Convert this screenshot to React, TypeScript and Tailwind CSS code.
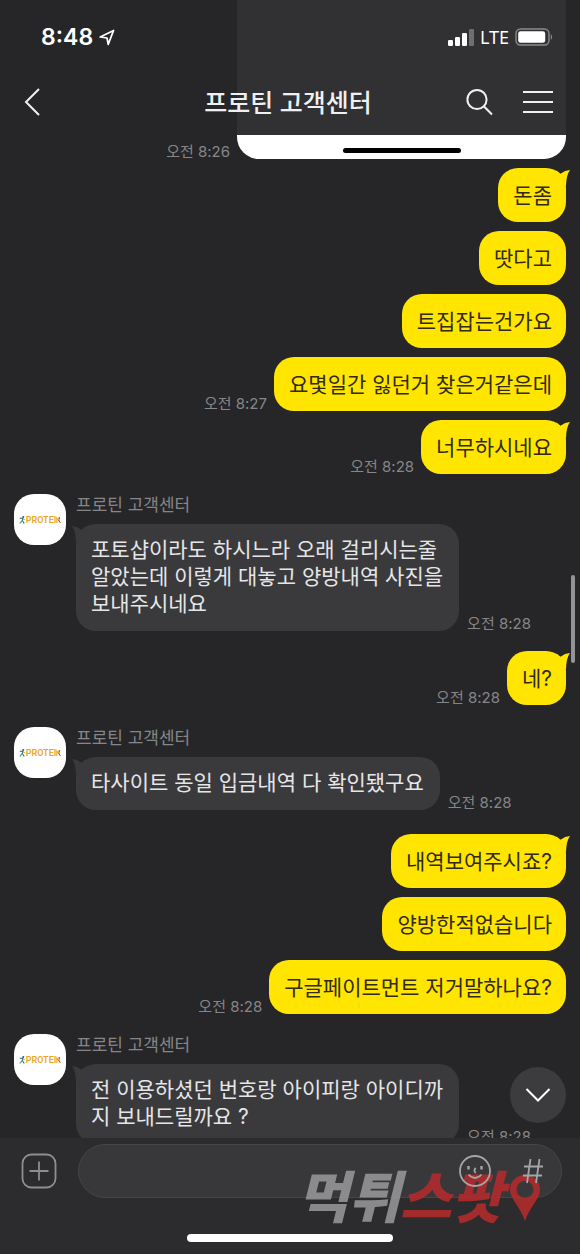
import { ReactNode } from "react";

type Message = {
  id: number;
  from: "me" | "center";
  text: string;
  time?: string;
  tail?: boolean;
  space: string;
};

const CENTER_NAME = "프로틴 고객센터";

const messages: Message[] = [
  { id: 1, from: "me", text: "돈좀", tail: true, space: "mt-[9px]" },
  { id: 2, from: "me", text: "땃다고", space: "mt-[9px]" },
  { id: 3, from: "me", text: "트집잡는건가요", space: "mt-[9px]" },
  {
    id: 4,
    from: "me",
    text: "요몇일간 잃던거 찾은거같은데",
    time: "오전 8:27",
    space: "mt-[9px]",
  },
  { id: 5, from: "me", text: "너무하시네요", time: "오전 8:28", tail: true, space: "mt-[9px]" },
  {
    id: 6,
    from: "center",
    text: "포토샵이라도 하시느라 오래 걸리시는줄\n알았는데 이렇게 대놓고 양방내역 사진을\n보내주시네요",
    time: "오전 8:28",
    space: "mt-5",
  },
  { id: 7, from: "me", text: "네?", time: "오전 8:28", tail: true, space: "mt-5" },
  {
    id: 8,
    from: "center",
    text: "타사이트 동일 입금내역 다 확인됐구요",
    time: "오전 8:28",
    space: "mt-[22px]",
  },
  { id: 9, from: "me", text: "내역보여주시죠?", tail: true, space: "mt-6" },
  { id: 10, from: "me", text: "양방한적없습니다", space: "mt-[9px]" },
  {
    id: 11,
    from: "me",
    text: "구글페이트먼트 저거말하나요?",
    time: "오전 8:28",
    space: "mt-[9px]",
  },
  {
    id: 12,
    from: "center",
    text: "전 이용하셨던 번호랑 아이피랑 아이디까\n지 보내드릴까요 ?",
    time: "오전 8:28",
    space: "mt-5",
  },
];

function Time({ children }: { children: ReactNode }) {
  return (
    <time className="shrink-0 text-[15px] leading-[14px] whitespace-nowrap text-[#868688]">
      {children}
    </time>
  );
}

function Avatar() {
  return (
    <div className="flex h-[51px] w-[52px] shrink-0 items-center justify-center rounded-[20px] bg-white">
      <svg width="7" height="10" viewBox="0 0 9 11" fill="none" aria-hidden="true">
        <circle cx="5.5" cy="1.6" r="1.3" fill="#2d5f7c" />
        <path d="M1 3.2 L5 3.4 L4.4 6.4 L6.8 10" stroke="#2d6f8c" strokeWidth="1.4" />
        <path d="M4.4 6 L1 10" stroke="#4b9a63" strokeWidth="1.4" />
        <path d="M5 4 L8 5.4" stroke="#e0a22c" strokeWidth="1.1" />
      </svg>
      <span className="font-['Roboto',sans-serif] text-[9px] leading-3 font-semibold text-[#eda528]">
        PROTEI
      </span>
      <svg width="5" height="8" viewBox="0 0 6 9" fill="none" aria-hidden="true">
        <path d="M1 8 V2 L4 6 V2" stroke="#eda528" strokeWidth="1.4" />
        <circle cx="4" cy="2" r="1" fill="#8a6436" />
        <path d="M3 5 L5.5 8" stroke="#b0533a" strokeWidth="1.2" />
      </svg>
    </div>
  );
}

function SentMessage({ message }: { message: Message }) {
  return (
    <div className={`flex items-end justify-end gap-[7px] pr-[14px] ${message.space}`}>
      {message.time && <Time>{message.time}</Time>}
      <div className="relative rounded-[20px] bg-[#ffe500] pt-[14px] pr-[14px] pb-3 pl-[15px]">
        {message.tail && (
          <svg
            className="absolute top-0 -right-1"
            width="18"
            height="18"
            viewBox="0 0 18 18"
            fill="#ffe500"
            aria-hidden="true"
          >
            <path d="M4 2.5 L8.5 5.8 Q13 2.3 18 2 Q14.3 7 14 18 L2 14 Z" />
          </svg>
        )}
        <p className="relative text-[21px] leading-7 text-[#302b12]">{message.text}</p>
      </div>
    </div>
  );
}

function ReceivedMessage({ message }: { message: Message }) {
  return (
    <div className={`flex gap-2.5 pl-[14px] ${message.space}`}>
      <Avatar />
      <div className="min-w-0">
        <h2 className="pb-2 text-[17px] leading-[22px] text-[#868688]">{CENTER_NAME}</h2>
        <div className="flex items-end gap-2">
          <div className="relative rounded-[20px] bg-[#3a3a3c] pt-3 pr-4 pb-[14px] pl-[15px]">
            <svg
              className="absolute top-0 -left-1"
              width="18"
              height="18"
              viewBox="0 0 18 18"
              fill="#3a3a3c"
              aria-hidden="true"
            >
              <path d="M14 2.5 L9.5 5.8 Q5 2.3 0 2 Q3.7 7 4 18 L16 14 Z" />
            </svg>
            <p className="relative text-[21px] leading-[27px] whitespace-pre-line text-[#e6e6e8]">
              {message.text}
            </p>
          </div>
          <Time>{message.time}</Time>
        </div>
      </div>
    </div>
  );
}

function StatusBar() {
  return (
    <div className="flex h-[74px] items-center justify-between pr-[27px] pl-[41px] text-white">
      <div className="flex items-center gap-1.5">
        <span className="text-[23px] leading-7 font-semibold">8:48</span>
        <svg width="16" height="17" viewBox="0 0 16 17" fill="none" aria-hidden="true">
          <path
            d="M1.2 8 L14.6 1.4 L9.2 15.4 L8 9 Z"
            stroke="currentColor"
            strokeWidth="1.7"
            strokeLinejoin="round"
          />
        </svg>
      </div>
      <div className="flex items-center gap-1.5">
        <svg width="26" height="17" viewBox="0 0 26 17" fill="currentColor" aria-hidden="true">
          <rect x="0" y="11" width="5" height="6" rx="1.3" />
          <rect x="7" y="8" width="5" height="9" rx="1.3" />
          <rect x="14" y="4" width="5" height="13" rx="1.3" />
          <rect x="21" y="0" width="5" height="17" rx="1.3" opacity="0.3" />
        </svg>
        <span className="font-['Noto_Sans',sans-serif] text-[18px] leading-6">LTE</span>
        <svg width="38" height="18" viewBox="0 0 38 18" fill="none" aria-hidden="true">
          <rect x="1" y="1" width="33" height="16" rx="4.5" stroke="#8a8a8c" strokeWidth="1.4" />
          <rect x="3.2" y="3.2" width="27" height="11.6" rx="2.4" fill="currentColor" />
          <path d="M35.8 6 Q38.6 9 35.8 12 Z" fill="#8a8a8c" />
        </svg>
      </div>
    </div>
  );
}

function Header() {
  return (
    <header className="absolute inset-x-0 top-0 z-10 h-[135px] bg-[#262628]/95">
      <StatusBar />
      <div className="grid grid-cols-[1fr_auto_1fr] items-center pr-[26px] pl-[22px] text-[#f0f0f2]">
        <button type="button" aria-label="뒤로" className="flex h-14 w-10 items-center">
          <svg width="24" height="30" viewBox="0 0 24 30" fill="none" stroke="currentColor" strokeWidth="2">
            <path d="M17 2 L4 15 L17 28" />
          </svg>
        </button>
        <h1 className="pt-0.5 text-[25px] leading-9 font-medium">{CENTER_NAME}</h1>
        <div className="flex items-center justify-end gap-7">
          <button type="button" aria-label="검색">
            <svg width="30" height="30" viewBox="0 0 30 30" fill="none" stroke="currentColor" strokeWidth="2">
              <circle cx="13" cy="12.5" r="9.6" />
              <path d="M19.8 19.3 L28 27.5" />
            </svg>
          </button>
          <button type="button" aria-label="메뉴">
            <svg width="32" height="30" viewBox="0 0 32 30" fill="none" stroke="currentColor" strokeWidth="2">
              <path d="M1 5 H31 M1 15 H31 M1 25 H31" />
            </svg>
          </button>
        </div>
      </div>
    </header>
  );
}

function Watermark() {
  return (
    <div className="pointer-events-none absolute right-[39px] bottom-6 flex items-center opacity-85">
      <p className="text-[56px] leading-[64px] font-black whitespace-nowrap text-[#9a9a9c] italic">
        먹튀<span className="text-[#b92b2c]">스팟</span>
      </p>
      <svg className="ml-1.5" width="32" height="48" viewBox="0 0 32 48" aria-hidden="true">
        <path
          fillRule="evenodd"
          fill="#b92b2c"
          d="M16 1 C7 1 1 7.5 1 15.5 C1 25 11 32 16 47 C21 32 31 25 31 15.5 C31 7.5 25 1 16 1 Z M16 7 A8.5 8.5 0 1 1 16 24 A8.5 8.5 0 1 1 16 7 Z"
        />
      </svg>
    </div>
  );
}

function Footer() {
  return (
    <footer className="relative bg-[#2c2c2e] pt-1.5 pb-3">
      <form className="flex items-center gap-[21px] pr-[18px] pl-[21px] text-[#8e8e90]">
        <button type="button" aria-label="첨부">
          <svg width="36" height="36" viewBox="0 0 36 36" fill="none" stroke="currentColor" strokeWidth="1.8">
            <rect x="1.5" y="1.5" width="33" height="33" rx="9" />
            <path d="M18 8.5 V27.5 M8.5 18 H27.5" />
          </svg>
        </button>
        <div className="flex h-[54px] flex-1 items-center rounded-full border border-[#454547] bg-[#38383a] pr-[17px]">
          <input
            type="text"
            aria-label="메시지 입력"
            className="h-full min-w-0 flex-1 bg-transparent px-5 text-[21px] text-white outline-none"
          />
          <div className="relative z-10 flex items-center gap-[30px] text-[#a5a5a7]">
            <button type="button" aria-label="이모티콘">
              <svg width="34" height="34" viewBox="0 0 34 34" fill="none" stroke="currentColor" strokeWidth="1.8">
                <circle cx="17" cy="17" r="15" />
                <path d="M10.5 12 V15.5 M23.5 12 V15.5" strokeWidth="2.4" />
                <path d="M17.8 14 Q15 16.5 17.8 19" />
                <path d="M10.5 20.5 Q17 27.5 23.5 20.5" />
              </svg>
            </button>
            <button type="button" aria-label="샵검색">
              <svg width="22" height="26" viewBox="0 0 22 26" fill="none" stroke="currentColor" strokeWidth="1.8">
                <path d="M8.5 1 L5 25 M17.5 1 L14 25 M2 8.5 H21 M1 17.5 H20" />
              </svg>
            </button>
          </div>
        </div>
      </form>
      <div className="mx-auto mt-9 h-2 w-[206px] rounded-full bg-white" />
      <Watermark />
    </footer>
  );
}

export default function App() {
  return (
    <div className="relative flex h-screen flex-col overflow-hidden bg-[#262628] font-['Inter','Noto_Sans_CJK_KR',sans-serif]">
      <Header />
      <main className="relative min-h-0 flex-1 overflow-hidden">
        {/* Photo message, mostly scrolled under the header */}
        <div className="flex items-end justify-end gap-[7px] pr-[14px]">
          <Time>오전 8:26</Time>
          <div className="flex h-[159px] w-[329px] items-end justify-center rounded-b-[22px] bg-white pb-1.5">
            <div className="h-[5px] w-[118px] rounded-full bg-black" />
          </div>
        </div>

        {messages.map((message) =>
          message.from === "me" ? (
            <SentMessage key={message.id} message={message} />
          ) : (
            <ReceivedMessage key={message.id} message={message} />
          )
        )}

        <div className="absolute top-[575px] right-[5px] h-[88px] w-1 rounded-full bg-[#949496]" />
        <button
          type="button"
          aria-label="맨 아래로"
          className="absolute right-[14px] bottom-[15px] flex h-14 w-14 items-center justify-center rounded-full bg-[#3c3c3e] text-white"
        >
          <svg width="26" height="16" viewBox="0 0 26 16" fill="none" stroke="currentColor" strokeWidth="2">
            <path d="M1.5 2 L13 13.5 L24.5 2" />
          </svg>
        </button>
      </main>
      <Footer />
    </div>
  );
}
